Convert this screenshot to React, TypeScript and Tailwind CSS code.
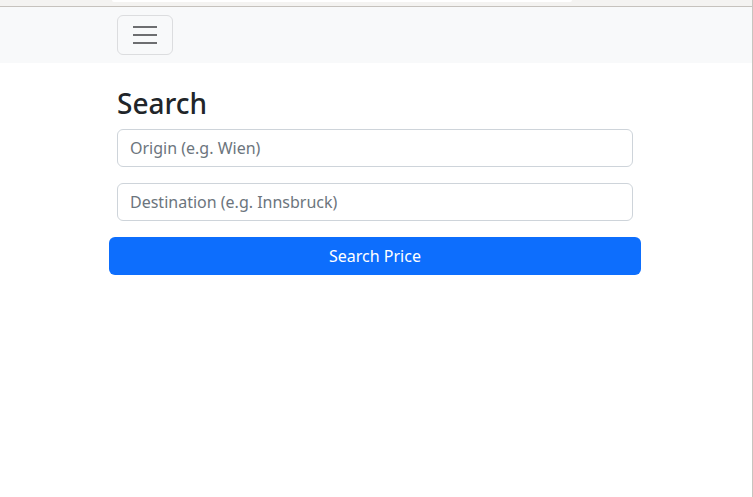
import React from "react";

export default function App() {
  return (
    <div
      className="flex h-[497px] w-[753px] flex-col overflow-hidden bg-white text-[#212529]"
      style={{ fontFamily: '"Noto Sans", "Open Sans", sans-serif' }}
    >
      <div className="flex w-full flex-1 flex-col border-r border-[#c8c4bf]">
        <div className="relative h-[7px] shrink-0 border-b border-[#c6c2bd] bg-[#f4f3f1]">
          <div className="absolute left-[112px] top-0 h-[2px] w-[460px] rounded-b-[4px] bg-white" />
        </div>
        <nav className="shrink-0 bg-[#f8f9fa] py-2">
          <div className="ml-[105px] w-[540px] px-3">
            <button className="flex h-[40px] w-[56px] items-center justify-center rounded-[6px] border border-[#dcdddf]">
              <span className="flex w-[24px] flex-col gap-[6px]">
                <span className="block h-[2px] w-full bg-[#6d6e70]" />
                <span className="block h-[2px] w-full bg-[#6d6e70]" />
                <span className="block h-[2px] w-full bg-[#6d6e70]" />
              </span>
            </button>
          </div>
        </nav>
        <main className="ml-[105px] w-[540px] px-3 pt-6">
          <h2 className="mb-2 text-[28px] font-medium leading-[1.2]">Search</h2>
          <div className="mb-4 flex h-[38px] items-center rounded-[6px] border border-[#ced4da] px-3 text-[16px] text-[#6c757d]">
            Origin (e.g. Wien)
          </div>
          <div className="mb-4 flex h-[38px] items-center rounded-[6px] border border-[#ced4da] px-3 text-[16px] text-[#6c757d]">
            Destination (e.g. Innsbruck)
          </div>
          <button className="mx-[-8px] flex h-[38px] w-[532px] items-center justify-center rounded-[6px] bg-[#0d6efd] text-[16px] text-white">
            Search Price
          </button>
        </main>
      </div>
    </div>
  );
}
